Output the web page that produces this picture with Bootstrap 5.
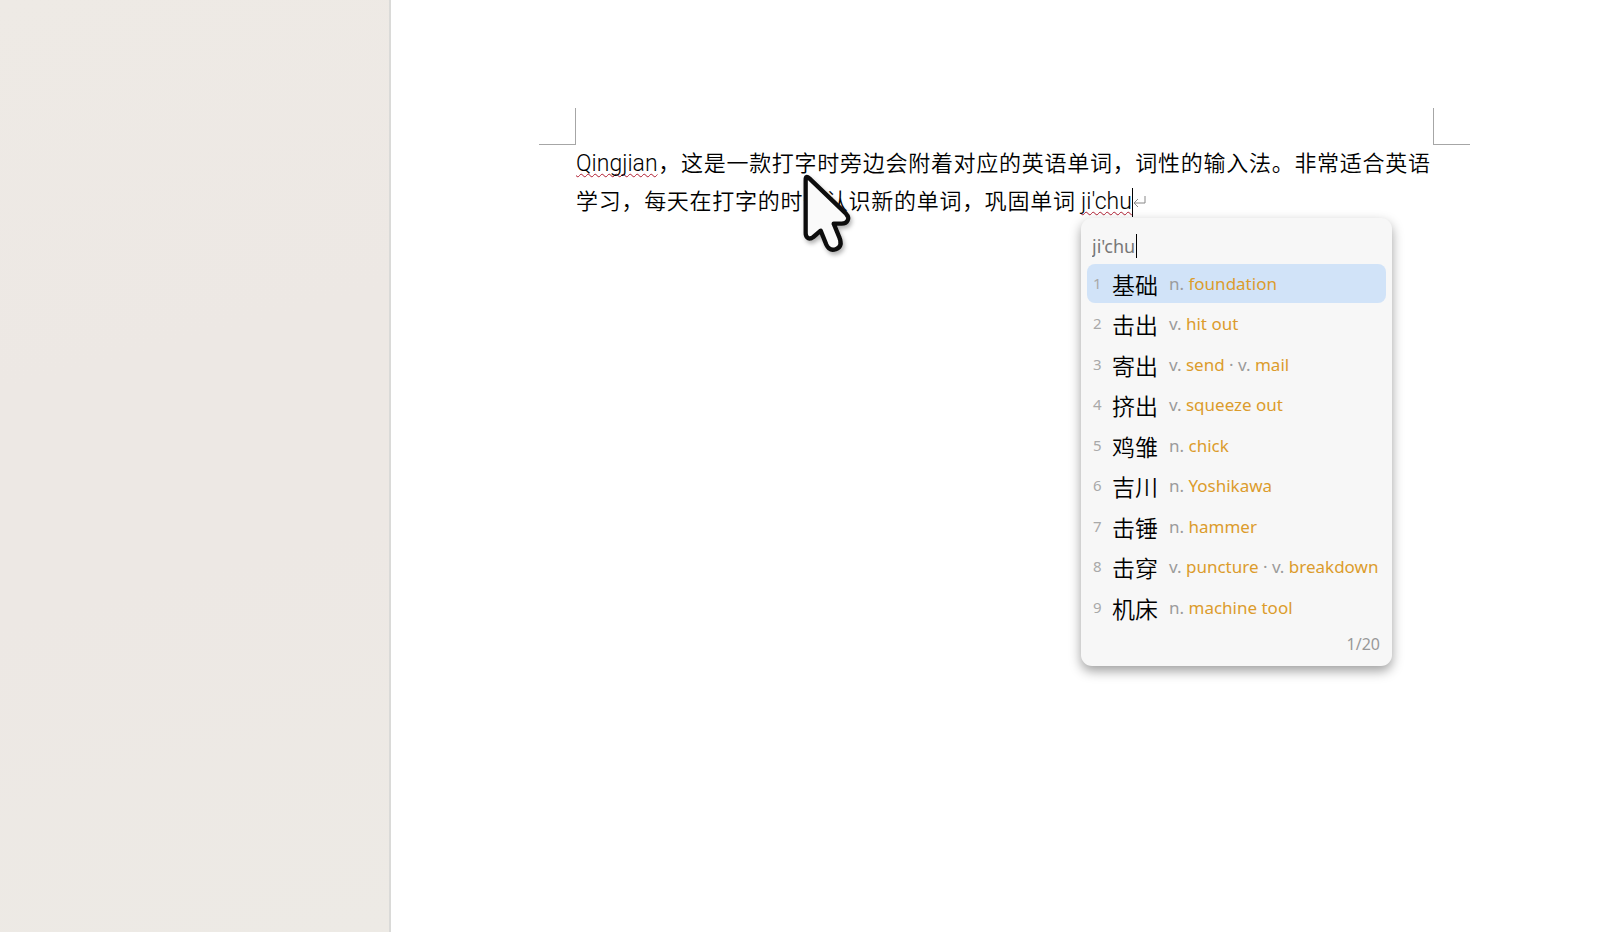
<!DOCTYPE html>
<html lang="zh-CN">
<head>
<meta charset="utf-8">
<meta name="viewport" content="width=device-width, initial-scale=1">
<title>Qingjian</title>
<link href="https://cdn.jsdelivr.net/npm/bootstrap@5.3.0/dist/css/bootstrap.min.css" rel="stylesheet">
<style>
  body { background: #fff; color: #000; }
  .desk {
    flex: 0 0 391px;
    border-right: 2px solid #dadad8;
    background: linear-gradient(165deg, #eeeae5 0%, #ede8e4 38%, #ede8e4 60%, #edeae5 100%);
  }
  .sheet { padding: 108px 166px 0 148px; }
  .crop-mark { width: 37px; height: 37px; border: 0 solid #a6a6a6; border-bottom-width: 1px; }
  .crop-left { border-right-width: 1px; }
  .crop-right { border-left-width: 1px; }
  .crop-row { margin-right: -36px; }
  .prose {
    margin: 0 4px 0 37px;
    font: 350 22px/38px Roboto, "Noto Sans CJK SC", sans-serif;
  }
  .prose-line { text-align: justify; text-align-last: justify; white-space: nowrap; }
  .prose-part { width: 499px; }
  .latin { font-size: 23px; }
  .typo { text-decoration: underline wavy #b01c30 1px; text-underline-offset: 2px; text-decoration-skip-ink: none; }
  .caret-bar { width: 1px; height: 29px; background: #000; }
  .composing { margin-left: 6px; }
  .ime {
    top: 100%; left: 0; z-index: 2; width: 311px; margin-top: -3px; padding: 16px 6px 10px;
    background: #f7f7f7; border-radius: 11px;
    box-shadow: 0 5px 12px rgba(0,0,0,.38);
    font: 18px/24px "Noto Sans", "Noto Sans CJK SC", sans-serif;
  }
  .ime-input {
    width: 45px; height: 24px; padding: 0; margin-left: 5px; border: 0; border-right: 1px solid #000;
    background: none; color: #777; outline: 0; font-size: 18px; line-height: 24px;
  }
  .cand-list { height: 363px; margin-top: 6px; }
  .cand {
    height: 39px; padding: 0 0 0 6px; border: 0; border-radius: 8px; background: none;
    text-align: left; white-space: nowrap; color: #9b9b9b; font-size: 17px;
  }
  .cand.chosen { background: #d1e3f8; }
  .cand-no { width: 19px; font-size: 15px; line-height: 24px; padding-bottom: 2px; color: #a9a9a9; }
  .cand-word { width: 57px; font: 350 23px/38px "Noto Sans CJK SC", sans-serif; color: #000; }
  .cand b { font-weight: 400; color: #dc9c2c; }
  .ime-page { margin: 5px 6px 0 0; color: #999; font-size: 16px; }
  .pointer { left: 223px; top: 25px; z-index: 3; width: 70px; height: 90px; }
</style>
</head>
<body>
<div class="d-flex min-vh-100">
  <aside class="desk"></aside>
  <main class="sheet flex-grow-1">
    <div class="crop-row d-flex justify-content-between">
      <div class="crop-mark crop-left"></div>
      <div class="crop-mark crop-right"></div>
    </div>
    <div class="prose position-relative">
      <div class="prose-line"><span class="latin typo">Qingjian</span>，这是一款打字时旁边会附着对应的英语单词，词性的输入法。非常适合英语</div>
      <div class="d-flex align-items-center">
        <div class="prose-line prose-part">学习，每天在打字的时候认识新的单词，巩固单词</div>
        <div class="composing position-relative d-flex align-items-center">
          <span class="latin typo">ji'chu</span><span class="caret-bar"></span>
          <section class="ime position-absolute" aria-label="输入法">
            <input class="ime-input d-block" type="text" value="ji'chu" aria-label="拼音">
            <div class="cand-list d-flex flex-column justify-content-between">
              <button type="button" class="cand chosen d-flex align-items-center"><span class="cand-no">1</span><span class="cand-word">基础</span><span>n. <b>foundation</b></span></button>
              <button type="button" class="cand d-flex align-items-center"><span class="cand-no">2</span><span class="cand-word">击出</span><span>v. <b>hit out</b></span></button>
              <button type="button" class="cand d-flex align-items-center"><span class="cand-no">3</span><span class="cand-word">寄出</span><span>v. <b>send</b> · v. <b>mail</b></span></button>
              <button type="button" class="cand d-flex align-items-center"><span class="cand-no">4</span><span class="cand-word">挤出</span><span>v. <b>squeeze out</b></span></button>
              <button type="button" class="cand d-flex align-items-center"><span class="cand-no">5</span><span class="cand-word">鸡雏</span><span>n. <b>chick</b></span></button>
              <button type="button" class="cand d-flex align-items-center"><span class="cand-no">6</span><span class="cand-word">吉川</span><span>n. <b>Yoshikawa</b></span></button>
              <button type="button" class="cand d-flex align-items-center"><span class="cand-no">7</span><span class="cand-word">击锤</span><span>n. <b>hammer</b></span></button>
              <button type="button" class="cand d-flex align-items-center"><span class="cand-no">8</span><span class="cand-word">击穿</span><span>v. <b>puncture</b> · v. <b>breakdown</b></span></button>
              <button type="button" class="cand d-flex align-items-center"><span class="cand-no">9</span><span class="cand-word">机床</span><span>n. <b>machine tool</b></span></button>
            </div>
            <div class="ime-page text-end">1/20</div>
          </section>
        </div>
        <svg width="13" height="12" viewBox="0 0 13 12" fill="none" stroke="#888" aria-hidden="true"><path d="M12 0v7H1M5 3 1 7l4 4"/></svg>
      </div>
      <!-- mouse pointer lying over the text -->
      <svg class="pointer position-absolute" viewBox="0 0 210 270" aria-hidden="true">
        <defs><filter id="soft" x="-20%" y="-20%" width="150%" height="150%"><feDropShadow dx="5" dy="9" stdDeviation="6" flood-opacity=".3"/></filter></defs>
        <path d="M20 29 Q20 15 31 25 L141 131 C154 145 146 161 128 161 L104 161 L121 202 C128 219 126 231 112 237 C98 243 88 237 82 224 L65 182 L43 201 C31 210 20 204 20 190 Z" fill="#fafafa" stroke="#111" stroke-width="13" stroke-linejoin="round" filter="url(#soft)"/>
      </svg>
    </div>
  </main>
</div>
<script src="https://cdn.jsdelivr.net/npm/bootstrap@5.3.0/dist/js/bootstrap.bundle.min.js"></script>
</body>
</html>
